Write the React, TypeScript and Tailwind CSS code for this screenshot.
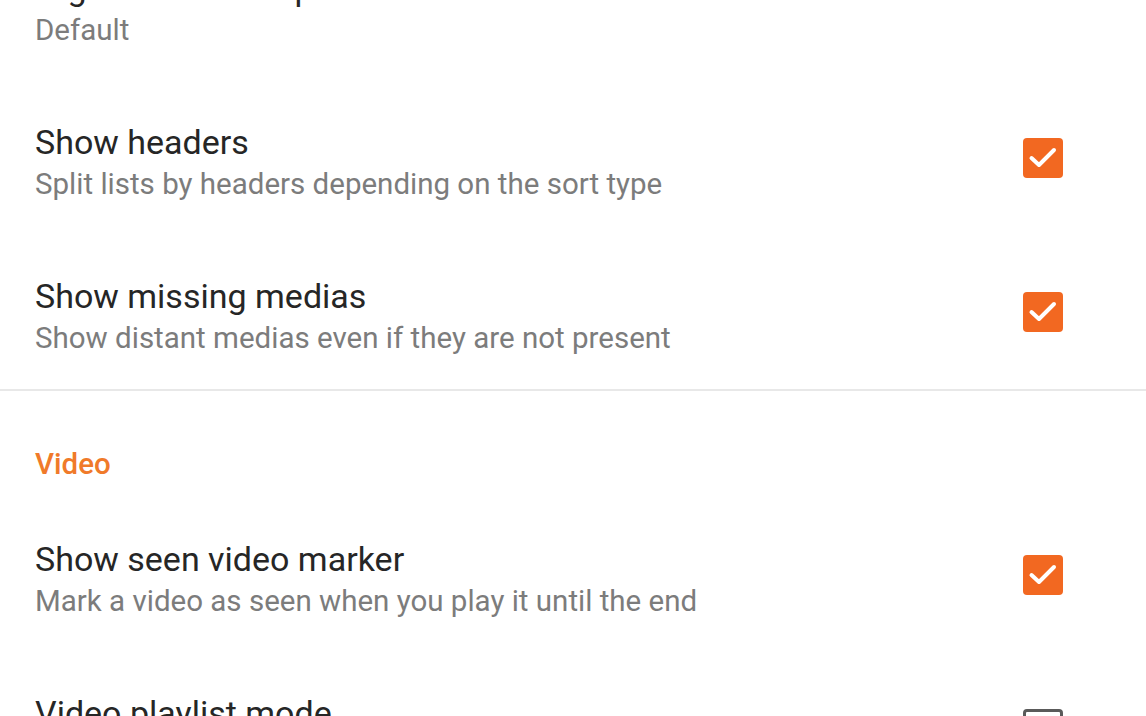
import React from "react";

type Item = { title: string; summary: string; checked?: boolean; noBox?: boolean };

function CheckBox({ checked }: { checked: boolean }) {
  if (checked) {
    return (
      <div className="w-[40px] h-[40px] rounded-[4px] bg-[#f26821] flex items-center justify-center">
        <svg width="40" height="40" viewBox="0 0 40 40">
          <path d="M8.5 20 L16 27 L31 12" fill="none" stroke="#ffffff" strokeWidth="4" strokeLinecap="round" strokeLinejoin="round" />
        </svg>
      </div>
    );
  }
  return <div className="w-[40px] h-[40px] rounded-[4px] border-[3px] border-[#5a5a5a]" />;
}

function Row({ title, summary, checked, noBox }: Item) {
  return (
    <div className="h-[154px] flex items-start pl-[35px] pr-[83px]">
      <div className="flex-1 pt-[41px]">
        <div className="text-[34px] leading-[40px] text-[#262626] whitespace-nowrap">{title}</div>
        <div className="text-[29.5px] leading-[45px] text-[#7c7c7c] whitespace-nowrap">{summary}</div>
      </div>
      {!noBox && (
        <div className="mt-[57px]">
          <CheckBox checked={!!checked} />
        </div>
      )}
    </div>
  );
}

export default function App() {
  return (
    <div
      className="w-[1146px] h-[716px] overflow-hidden bg-white"
      style={{ fontFamily: "Roboto, 'Noto Sans', sans-serif" }}
    >
      <div className="-mt-[73px] flex flex-col">
        <Row title="Night mode as top" summary="Default" noBox />
        <Row title="Show headers" summary="Split lists by headers depending on the sort type" checked />
        <Row title="Show missing medias" summary="Show distant medias even if they are not present" checked />
        <div className="h-[2px] bg-[#e8e8e8]" />
        <div className="pl-[35px] pt-[56px] pb-[17px] h-[107px]">
          <div className="text-[29.5px] leading-[34px] font-medium text-[#f07a2a]">Video</div>
        </div>
        <Row title="Show seen video marker" summary="Mark a video as seen when you play it until the end" checked />
        <Row title="Video playlist mode" summary="Play videos one after another" checked={false} />
      </div>
    </div>
  );
}
